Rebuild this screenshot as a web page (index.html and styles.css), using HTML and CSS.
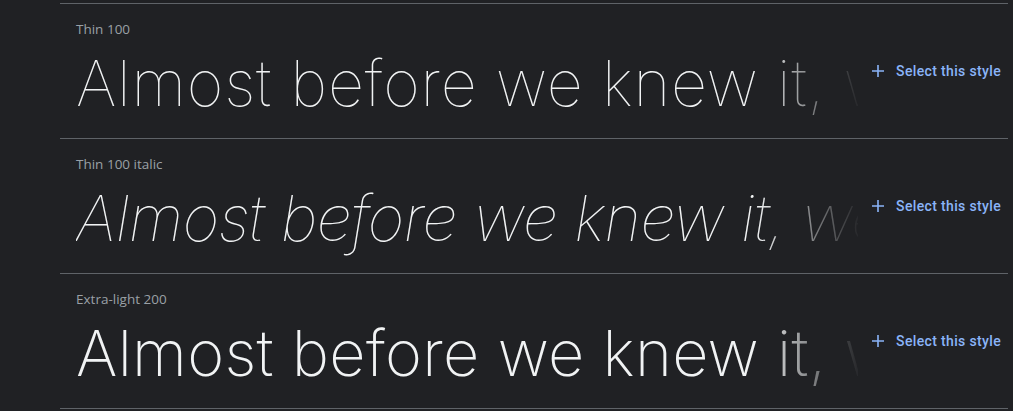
FILE: index.html
```html
<!DOCTYPE html>
<html>
<head>
<meta charset="utf-8">
<link rel="stylesheet" href="styles.css">
</head>
<body>
<div class="list">
  <div class="row">
    <div class="main">
      <div class="label">Thin 100</div>
      <div class="specimen w100">Almost before we knew it, we had left the ground.</div>
    </div>
    <button class="select"><svg class="plus" width="12" height="12" viewBox="0 0 12 12"><path d="M6 0v12M0 6h12" stroke="#8ab4f8" stroke-width="1.6"/></svg><span>Select this style</span></button>
  </div>
  <div class="row">
    <div class="main">
      <div class="label">Thin 100 italic</div>
      <div class="specimen w100 it">Almost before we knew it, we had left the ground.</div>
    </div>
    <button class="select"><svg class="plus" width="12" height="12" viewBox="0 0 12 12"><path d="M6 0v12M0 6h12" stroke="#8ab4f8" stroke-width="1.6"/></svg><span>Select this style</span></button>
  </div>
  <div class="row">
    <div class="main">
      <div class="label">Extra-light 200</div>
      <div class="specimen w200">Almost before we knew it, we had left the ground.</div>
    </div>
    <button class="select"><svg class="plus" width="12" height="12" viewBox="0 0 12 12"><path d="M6 0v12M0 6h12" stroke="#8ab4f8" stroke-width="1.6"/></svg><span>Select this style</span></button>
  </div>
</div>
</body>
</html>
```
FILE: styles.css
```css
html, body {
  margin: 0;
  padding: 0;
  background: #202124;
  overflow: hidden;
}
.list {
  margin: 3px 5px 0 60px;
  border-bottom: 1px solid #5f6368;
}
.row {
  display: flex;
  align-items: flex-start;
  height: 134px;
  border-top: 1px solid #5f6368;
}
.main {
  flex: 1;
  min-width: 0;
  padding: 15px 0 0 16px;
}
.label {
  font-family: "Open Sans", Roboto, sans-serif;
  font-size: 13.5px;
  line-height: 20px;
  color: #9aa0a6;
}
.specimen {
  font-family: Inter, "Noto Sans", sans-serif;
  font-size: 63px;
  line-height: 80px;
  padding-top: 4px;
  letter-spacing: 0.8px;
  color: #f1f3f4;
  white-space: nowrap;
  overflow: hidden;
  width: 782px;
  -webkit-mask-image: linear-gradient(to right, #000 680px, transparent 786px);
  mask-image: linear-gradient(to right, #000 680px, transparent 786px);
}
.w100 { font-weight: 100; }
.w200 { font-weight: 200; letter-spacing: 0.3px; }
.it { font-style: italic; letter-spacing: -0.6px; }
.select {
  display: flex;
  align-items: center;
  gap: 12px;
  margin: 57px 7px 0 0;
  padding: 0;
  background: none;
  border: 0;
  font-family: Roboto, "Liberation Sans", sans-serif;
  font-weight: 500;
  font-size: 14px;
  letter-spacing: 0.35px;
  line-height: 20px;
  color: #8ab4f8;
  white-space: nowrap;
}
.plus { display: block; }
```
